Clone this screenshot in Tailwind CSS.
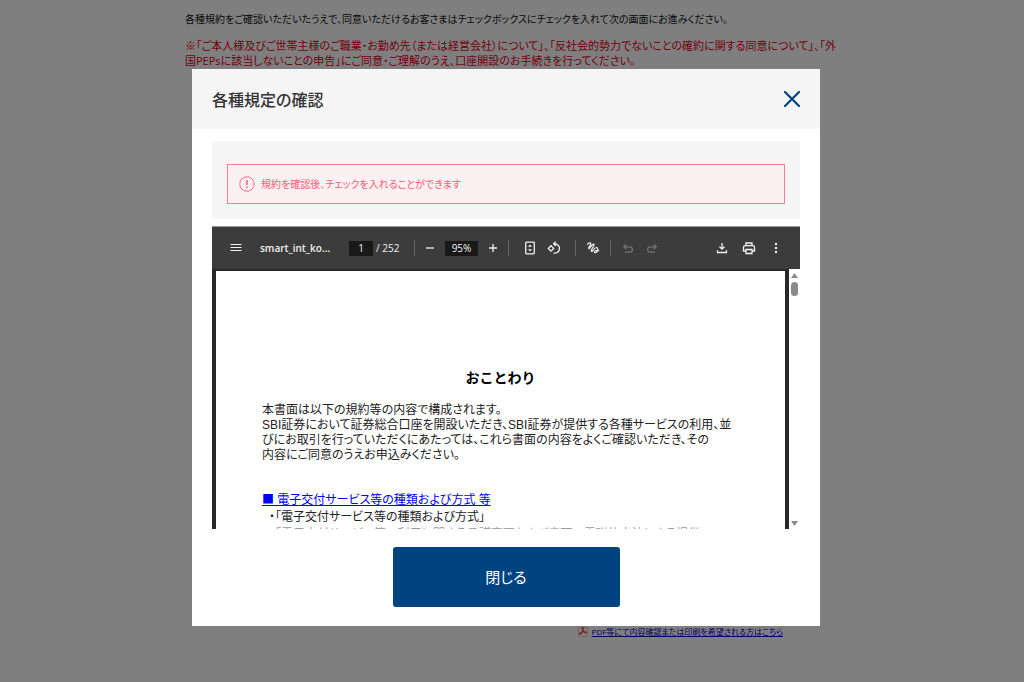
<!DOCTYPE html>
<html lang="ja">
<head>
    <meta charset="UTF-8">
    <meta name="viewport" content="width=device-width, initial-scale=1.0">
    <title>各種規定の確認</title>
    <script src="https://cdn.jsdelivr.net/npm/@tailwindcss/browser@4"></script>
</head>
<body class="min-h-screen overflow-hidden bg-white pr-3 font-['Open_Sans','Noto_Sans_CJK_JP',sans-serif] [font-feature-settings:'palt']">
    <!-- Page behind the dialog -->
    <main class="mx-auto flex h-screen max-w-[642px] flex-col">
        <p class="pt-3 text-[10px] leading-[15px] text-[#111]">各種規約をご確認いただいたうえで、同意いただけるお客さまはチェックボックスにチェックを入れて次の画面にお進みください。</p>
        <p class="pt-[11px] text-[11px] leading-[15px] whitespace-nowrap text-[#e60020]">※「ご本人様及びご世帯主様のご職業・お勤め先（または経営会社）について」、「反社会的勢力でないことの確約に関する同意について」、「外<br>国PEPsに該当しないことの申告」にご同意・ご理解のうえ、口座開設のお手続きを行ってください。</p>
        <div class="mt-auto flex items-center justify-end gap-1 pr-11 pb-11 text-[8px] leading-3">
            <svg class="size-[10px]" viewBox="0 0 10 10" fill="none" stroke="#e44" stroke-width="1.1"><rect x="0.5" y="0.5" width="9" height="9" stroke-width="0.3"/><path d="M4.5 0.500c1.400 0 .6 2.600-.3 4.200C3.200 6.500 2.200 7.600 1.500 7.200c-.6-.6 1.500-2 3.500-2.300 2-.3 3.700 0 3.500.8-.3.900-2-.3-3-1.700C4.300 2.500 3.600.6 4.500.5z"/></svg>
            <a href="#" class="text-[#0000cc] underline">PDF等にて内容確認または印刷を希望される方はこちら</a>
        </div>
    </main>

    <!-- Dialog -->
    <div class="fixed inset-0 flex items-start justify-center bg-black/50 pt-[69px] pr-3">
        <div role="dialog" aria-labelledby="dialog-title" class="w-full max-w-[628px] bg-white">
            <header class="flex h-[60px] items-center justify-between bg-[#f5f5f5] px-5">
                <h1 id="dialog-title" class="pt-[2px] text-[16px] leading-6 font-medium text-[#333]">各種規定の確認</h1>
                <button type="button" aria-label="閉じる" class="text-[#004381]">
                    <svg class="size-4" viewBox="0 0 16 16" fill="none" stroke="currentColor" stroke-width="2.2" stroke-linecap="round"><path d="M1 1l14 14M15 1L1 15"/></svg>
                </button>
            </header>

            <div class="px-5 pt-3 pb-[19px]">
                <div class="bg-[#f5f5f5] px-[15px] pt-[23px] pb-[15px]">
                    <p class="flex h-10 items-center gap-[6px] border border-[#ff7c90] bg-[#fbf0f2] px-[11px] text-[10px] text-[#ff5a73]">
                        <svg class="size-4" viewBox="0 0 16 16" fill="none" stroke="currentColor"><circle cx="8" cy="8" r="7.2" stroke-width="0.9"/><path d="M8 4v5M8 10.500v1.500" stroke-width="1.500"/></svg>
                        規約を確認後、チェックを入れることができます
                    </p>
                </div>

                <!-- PDF viewer -->
                <div class="mt-[7px]">
                    <div class="flex h-[43px] items-center border-t border-[#999] bg-[#3c3c3c] px-[18px] text-[10px] text-[#f1f1f1]">
                        <button type="button" aria-label="メニュー"><svg class="size-3" viewBox="0 0 12 12" fill="none" stroke="currentColor" stroke-width="1.200"><path d="M.5 2.500h11M.5 5.500h11M.5 8.500h11"/></svg></button>
                        <span class="ml-[18px] w-[89px] font-semibold">smart_int_ko...</span>
                        <input type="text" value="1" aria-label="ページ" class="h-[15px] w-6 bg-[#191919] text-center">
                        <span class="ml-[3px] w-[38px] whitespace-nowrap">/ 252</span>
                        <span class="h-4 w-px bg-[#666]"></span>
                        <button type="button" aria-label="縮小" class="ml-[10px]"><svg class="size-[10px]" viewBox="0 0 10 10" fill="none" stroke="currentColor" stroke-width="1.300"><path d="M1 5h8"/></svg></button>
                        <input type="text" value="95%" aria-label="ズーム" class="ml-[10px] h-[15px] w-[33px] bg-[#191919] text-center">
                        <button type="button" aria-label="拡大" class="ml-[10px]"><svg class="size-[10px]" viewBox="0 0 10 10" fill="none" stroke="currentColor" stroke-width="1.300"><path d="M1 5h8M5 1v8"/></svg></button>
                        <span class="ml-[10px] h-4 w-px bg-[#666]"></span>
                        <button type="button" aria-label="ページに合わせる" class="ml-[14px]"><svg class="size-[14px]" viewBox="0 0 14 14" fill="none" stroke="currentColor" stroke-width="1.300"><rect x="2.700" y="1.200" width="8.600" height="11.600" rx=".8"/><path d="M5 5.800L7 3.600l2 2.200zM5 8.200l2 2.200 2-2.200z" fill="currentColor" stroke="none"/></svg></button>
                        <button type="button" aria-label="回転" class="ml-[10px]"><svg class="size-[14px]" viewBox="0 0 14 14" fill="none" stroke="currentColor" stroke-width="1.300"><path d="M4 4.700L6.700 7.400 4 10.100 1.300 7.400zM7 2.800h1.200a4.700 4.700 0 1 1-1.700 9.200M8.800.6L6.600 2.800l2.200 2.200"/></svg></button>
                        <span class="ml-[14px] h-4 w-px bg-[#666]"></span>
                        <button type="button" aria-label="描画" class="ml-[10px]"><svg class="size-[14px]" viewBox="0 0 14 14" fill="none" stroke="currentColor" stroke-width="1.200" stroke-linecap="round"><path d="M1.500 3.200C2.500 1.600 4.800 1.200 4.800 2.800 4.800 4.400 2 6.200 2.700 7.500 3.500 8.700 6.500 2 8 3.300 9.300 4.500 4.300 8.500 5.300 10.200 6.300 11.500 8.300 6.500 10.500 6.500 12.500 6.500 12 11 9.800 11.600 8 12 8.200 10.200 9.500 9.700 10.700 9.300 12 9.400 13 9.700"/></svg></button>
                        <span class="ml-[10px] h-4 w-px bg-[#666]"></span>
                        <button type="button" aria-label="元に戻す" class="ml-[11px] text-[#777]"><svg class="size-3" viewBox="0 0 12 12" fill="none" stroke="currentColor" stroke-width="1.200"><path d="M3 10.200h4.700a2.700 2.700 0 0 0 0-5.400H2M4.400 2.200L1.800 4.800l2.600 2.600"/></svg></button>
                        <button type="button" aria-label="やり直し" class="ml-3 text-[#777]"><svg class="size-3" viewBox="0 0 12 12" fill="none" stroke="currentColor" stroke-width="1.200"><path d="M9 10.200H4.300a2.700 2.700 0 0 1 0-5.400H10M7.600 2.200l2.600 2.600-2.600 2.600"/></svg></button>
                        <button type="button" aria-label="ダウンロード" class="ml-auto"><svg class="size-3" viewBox="0 0 12 12" fill="none" stroke="currentColor" stroke-width="1.300"><path d="M6 1v6M3.400 4.600L6 7.200l2.600-2.600M1.500 8.200v2.300h9V8.200"/></svg></button>
                        <button type="button" aria-label="印刷" class="ml-[14px]"><svg class="size-[14px]" viewBox="0 0 14 14" fill="none" stroke="currentColor" stroke-width="1.300"><path d="M4 4.500V2h6v2.500M4 10H1.500V6.500c0-1.200.6-1.800 1.800-1.800h7.400c1.200 0 1.800.6 1.800 1.800V10H10M4 8.500h6v4H4z"/></svg></button>
                        <button type="button" aria-label="その他" class="ml-[14px]"><svg class="size-3" viewBox="0 0 12 12" fill="currentColor"><circle cx="6" cy="2" r="1.200"/><circle cx="6" cy="6" r="1.200"/><circle cx="6" cy="10" r="1.200"/></svg></button>
                    </div>
                    <div class="flex h-[260px]">
                        <div class="min-w-0 flex-1 bg-[#282828] px-1 pt-[2px]">
                            <article class="h-full overflow-hidden bg-white px-[46px] pt-[97px] text-[12px] leading-[15px] text-[#222] font-['Liberation_Sans','Noto_Sans_CJK_JP',sans-serif]">
                                <h2 class="text-center text-[14px] leading-5 font-bold text-black [font-feature-settings:normal]">おことわり</h2>
                                <p class="mt-[15px] whitespace-nowrap">本書面は以下の規約等の内容で構成されます。<br>SBI証券において証券総合口座を開設いただき、SBI証券が提供する各種サービスの利用、並<br>びにお取引を行っていただくにあたっては、これら書面の内容をよくご確認いただき、その<br>内容にご同意のうえお申込みください。</p>
                                <a href="#" class="mt-[27px] block leading-[17px] text-[#0000ff] underline"><span class="font-['Noto_Sans_CJK_JP']">■</span> 電子交付サービス等の種類および方式 等</a>
                                <ul class="pl-[7px] leading-[17px] whitespace-nowrap">
                                    <li>・「電子交付サービス等の種類および方式」</li>
                                    <li class="text-[#999]">・「電子交付サービス等の利用に関する承諾事項および書面の電磁的方法による提供」</li>
                                </ul>
                            </article>
                        </div>
                        <div class="flex w-[11px] flex-col items-center bg-white pt-1 pb-[3px] text-[#8b8b8b]">
                            <svg class="h-[5px] w-[7px]" viewBox="0 0 7 5" fill="currentColor"><path d="M3.500 0L7 5H0z"/></svg>
                            <span class="mt-1 h-[14px] w-[7px] rounded-full bg-[#8b8b8b]"></span>
                            <svg class="mt-auto h-[5px] w-[7px]" viewBox="0 0 7 5" fill="currentColor"><path d="M3.500 5L0 0h7z"/></svg>
                        </div>
                    </div>
                </div>

                <button type="button" class="mx-auto mt-[18px] block h-[60px] w-[227px] rounded-[3px] bg-[#004381] text-[15px] text-white">閉じる</button>
            </div>
        </div>
    </div>
</body>
</html>
